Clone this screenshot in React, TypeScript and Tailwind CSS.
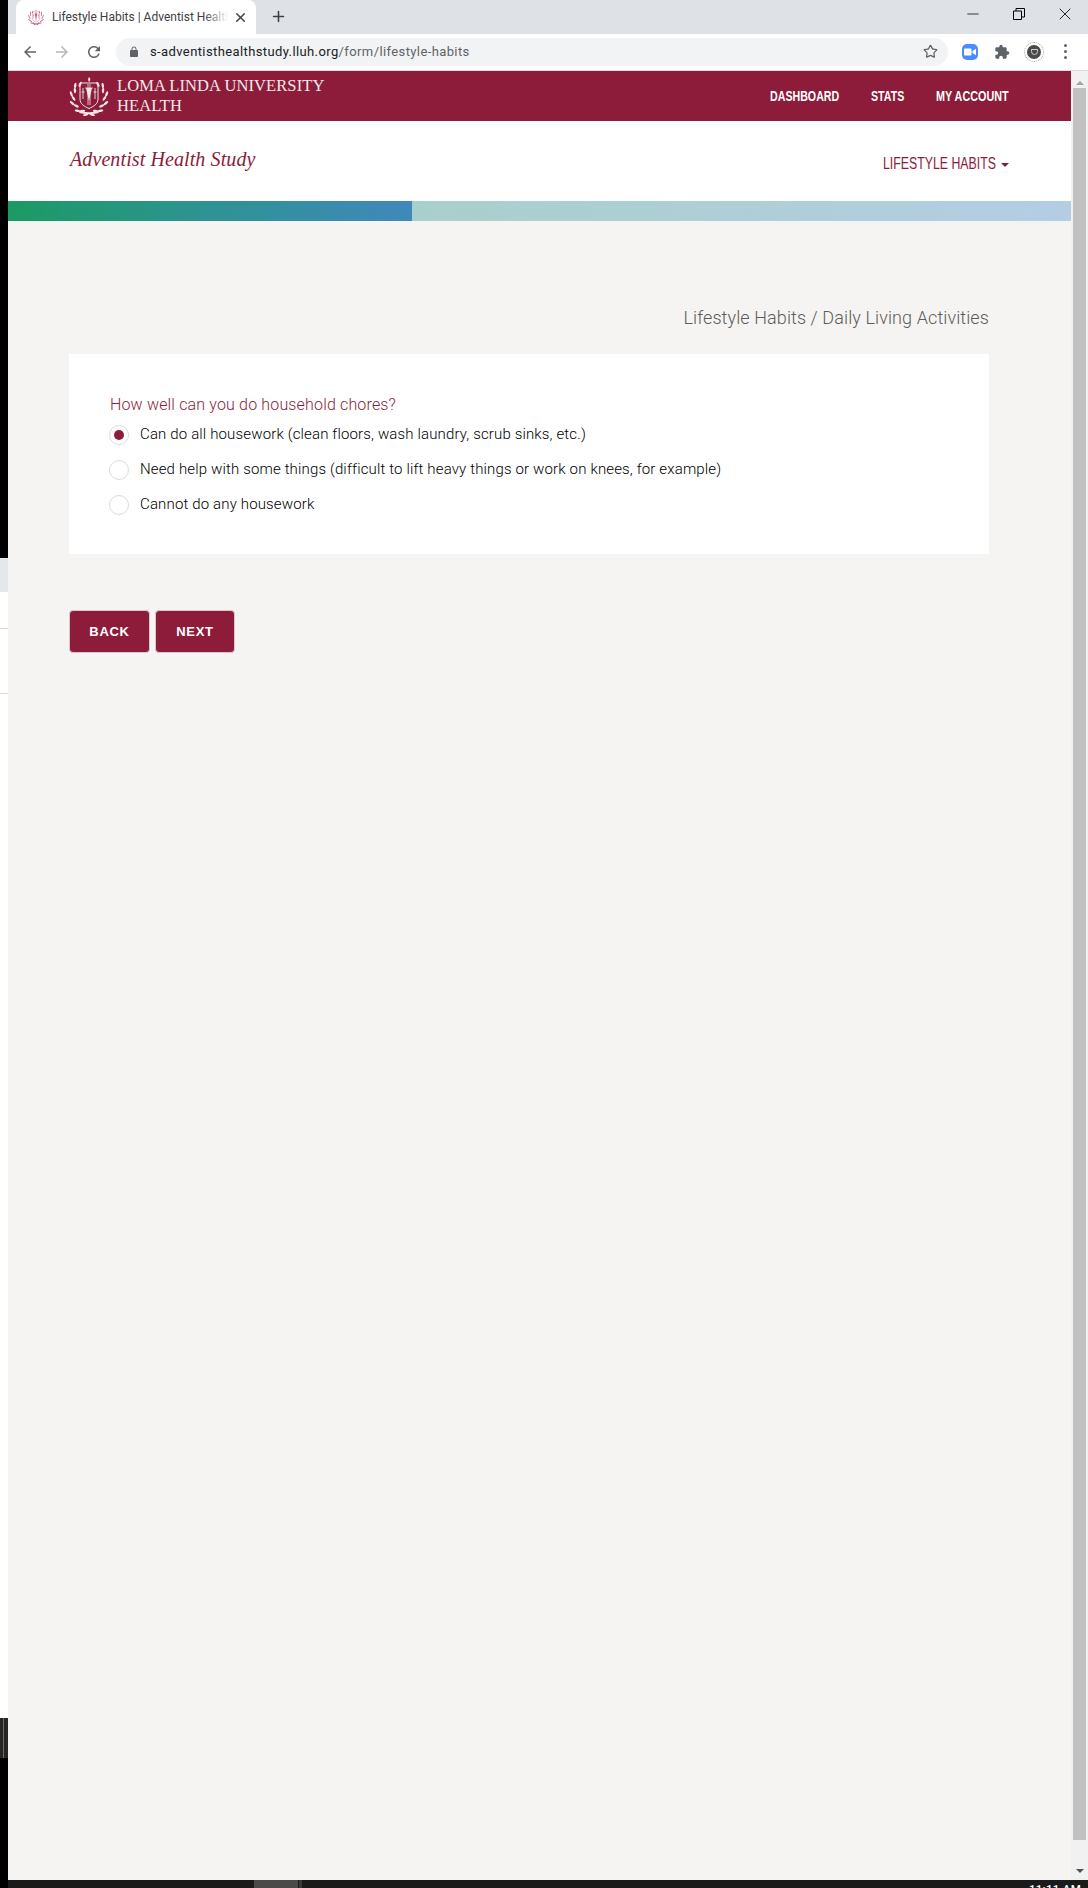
import { Minus, Plus, Star, X } from "lucide-react";

const crimson = "bg-[#8c1c3a]";

function Crest({ className, color }: { className: string; color: string }) {
  const leaves = [0, 1, 2, 3, 4, 5, 6, 7, 8, 9];
  return (
    <svg viewBox="0 0 40 40" className={className} fill="none" stroke={color}>
      {leaves.map((i) => {
        const deg = 100 + i * 15;
        const rad = (deg * Math.PI) / 180;
        const outer = i % 2 === 0 ? 18 : 15.5;
        const x = outer * Math.cos(rad);
        const y = outer * Math.sin(rad);
        return (
          <g key={i}>
            <ellipse cx={20 + x} cy={21 + y} rx="2.8" ry="1.2" fill={color} stroke="none" transform={`rotate(${deg + 60} ${20 + x} ${21 + y})`} />
            <ellipse cx={20 - x} cy={21 + y} rx="2.8" ry="1.2" fill={color} stroke="none" transform={`rotate(${-deg - 60} ${20 - x} ${21 + y})`} />
          </g>
        );
      })}
      <path d="M11 7h18v16c0 5-4.500 7.500-9 9.500-4.500-2-9-4.500-9-9.500z" strokeWidth="1" />
      <path d="M19 8v21M21 8v21M16 12h8" strokeWidth=".8" />
      <path d="M17 12l3 13 3-13z" fill={color} stroke="none" />
      <path d="M14 12v11M12.500 16h3M26 12v11M24.500 16h3" strokeWidth=".9" />
      <path d="M20 1c2 1.500 1.500 3.500 0 5-1-1.500-1.500-3 0-5z" fill={color} stroke="none" />
      <path d="M9 34c4 3 18 3 22 0l-1.500 3c-5 1.500-14 1.500-19 0z" fill={color} stroke="none" />
    </svg>
  );
}

function ChromeBar() {
  return (
    <>
      <div className="flex h-[34px] items-end bg-[#dee1e6]">
        <div className="ml-2 flex h-[34px] w-[240px] items-center rounded-t-lg bg-white pl-3 pr-2">
          <Crest className="h-4 w-4 shrink-0" color="#c4557a" />
          <div className="relative ml-2 w-[176px] overflow-hidden whitespace-nowrap text-xs text-[#3c4043]">
            Lifestyle Habits | Adventist Health Study
            <div className="absolute inset-y-0 right-0 w-6 bg-gradient-to-r from-transparent to-white" />
          </div>
          <X className="ml-[5px] h-[15px] w-[15px] text-[#45484c]" strokeWidth={2.5} />
        </div>
        <Plus className="mb-[9px] ml-[14px] h-[17px] w-[17px] text-[#3c4043]" strokeWidth={2.2} />
        <div className="mb-[6px] ml-auto flex h-7 text-black">
          <div className="flex w-[46px] items-center justify-center"><Minus className="h-[18px] w-[18px]" strokeWidth={1} /></div>
          <div className="flex w-[46px] items-center justify-center">
            <svg viewBox="0 0 12 12" className="h-3 w-3" fill="none" stroke="currentColor">
              <path d="M.5 3h8v8.500h-8zM3 3V.500h8.500V9H8.500" />
            </svg>
          </div>
          <div className="flex w-[46px] items-center justify-center"><X className="h-5 w-5" strokeWidth={1} /></div>
        </div>
      </div>
      <div className="flex h-[37px] items-center border-b border-[#dadce0] bg-white pb-px">
        <svg viewBox="0 0 24 24" className="ml-[13px] h-[18px] w-[18px]" fill="#5f6368"><path d="M20 11H7.830l5.590-5.590L12 4l-8 8 8 8 1.410-1.410L7.830 13H20v-2z" /></svg>
        <svg viewBox="0 0 24 24" className="ml-[14px] h-[18px] w-[18px] rotate-180" fill="#b5b7ba"><path d="M20 11H7.830l5.590-5.590L12 4l-8 8 8 8 1.410-1.410L7.830 13H20v-2z" /></svg>
        <svg viewBox="0 0 24 24" className="ml-[14px] h-[18px] w-[18px]" fill="#5f6368"><path d="M17.650 6.350C16.200 4.900 14.210 4 12 4c-4.420 0-7.990 3.580-7.990 8s3.570 8 7.990 8c3.730 0 6.840-2.550 7.730-6h-2.080c-.82 2.330-3.040 4-5.650 4-3.310 0-6-2.690-6-6s2.690-6 6-6c1.660 0 3.140.69 4.220 1.780L13 11h7V4l-2.350 2.350z" /></svg>
        <div className="ml-[13px] flex h-7 w-[832px] items-center rounded-full bg-[#f1f3f4] pl-[12px] pr-[10px]">
          <svg viewBox="0 0 24 24" className="h-3 w-3" fill="#5f6368"><path d="M18 8h-1V6c0-2.760-2.240-5-5-5S7 3.240 7 6v2H6c-1.100 0-2 .9-2 2v10c0 1.100.9 2 2 2h12c1.100 0 2-.9 2-2V10c0-1.100-.9-2-2-2zm-2.900 0H8.900V6c0-1.710 1.390-3.100 3.100-3.100 1.710 0 3.100 1.390 3.100 3.100v2z" /></svg>
          <span className="ml-[10px] whitespace-nowrap text-[13px] tracking-[0.39px] text-[#202124]">
            s-adventisthealthstudy.lluh.org<span className="text-[#5f6368]">/form/lifestyle-habits</span>
          </span>
          <Star className="ml-auto h-[15px] w-[15px] text-[#5f6368]" strokeWidth={2} />
        </div>
        <div className="ml-[14px] flex h-4 w-4 items-center justify-center rounded-[5px] bg-[#4a8cff]">
          <svg viewBox="0 0 12 8" className="h-[8px] w-[12px]" fill="white"><path d="M0 1.500A1 1 0 0 1 1 .5h5.500a1 1 0 0 1 1 1v5a1 1 0 0 1-1 1H1a1 1 0 0 1-1-1zM8.500 3L12 .8v6.400L8.500 5z" /></svg>
        </div>
        <svg viewBox="0 0 24 24" className="ml-4 h-4 w-4" fill="#5f6368"><path d="M20.500 11H19V7c0-1.100-.9-2-2-2h-4V3.500C13 2.120 11.880 1 10.500 1S8 2.120 8 3.500V5H4c-1.100 0-1.990.9-1.990 2v3.800H3.500c1.490 0 2.700 1.210 2.700 2.700s-1.210 2.700-2.700 2.700H2V20c0 1.100.9 2 2 2h3.800v-1.500c0-1.490 1.210-2.700 2.700-2.700 1.490 0 2.700 1.210 2.700 2.700V22H17c1.100 0 2-.9 2-2v-4h1.500c1.380 0 2.500-1.120 2.500-2.500S21.880 11 20.500 11z" /></svg>
        <div className="ml-[14px] flex h-5 w-5 items-center justify-center rounded-full border border-dotted border-[#9a9a9a] bg-white">
          <div className="flex h-[14px] w-[14px] items-center justify-center rounded-full bg-[#4a4a4a]">
            <div className="h-[6px] w-[7px] rounded-b-full border border-[#cfcfcf]" />
          </div>
        </div>
        <div className="ml-5 flex flex-col gap-[3px]">
          <div className="h-[3px] w-[3px] rounded-full bg-[#5f6368]" />
          <div className="h-[3px] w-[3px] rounded-full bg-[#5f6368]" />
          <div className="h-[3px] w-[3px] rounded-full bg-[#5f6368]" />
        </div>
      </div>
    </>
  );
}

function RadioRow({ label, checked }: { label: string; checked?: boolean }) {
  return (
    <label className="flex h-[35px] items-center gap-[11px] text-[15px] font-light tracking-[0.15px] text-black">
      <span className="flex h-5 w-5 items-center justify-center rounded-full border border-[#dcdcdc] bg-white">
        {checked && <span className="h-[10px] w-[10px] rounded-full bg-[#8c1c3a]" />}
      </span>
      {label}
    </label>
  );
}

function PageBody() {
  return (
    <div className="min-w-0 flex-1 bg-[#f5f4f2] font-['Roboto',sans-serif]">
      <div className={`flex h-[50px] items-center justify-between pl-[61px] pr-[61px] ${crimson}`}>
        <div className="flex items-center gap-[8px]">
          <Crest className="h-[40px] w-[40px]" color="#f3e6ea" />
          <div className="font-['Liberation_Serif',serif] text-[16.500px] leading-[20px] tracking-[0.1px] text-[#f5e9ec]">
            LOMA LINDA UNIVERSITY
            <br />
            HEALTH
          </div>
        </div>
        {/* no condensed face installed, so the nav text is squeezed */}
        <nav className="flex gap-[31px] font-['Liberation_Sans',sans-serif] text-[15px] font-bold text-white">
          <span className="w-[70px]"><span className="inline-block origin-left scale-x-[0.71] whitespace-nowrap">DASHBOARD</span></span>
          <span className="w-[34px]"><span className="inline-block origin-left scale-x-[0.71] whitespace-nowrap">STATS</span></span>
          <span className="w-[74px]"><span className="inline-block origin-left scale-x-[0.72] whitespace-nowrap">MY ACCOUNT</span></span>
        </nav>
      </div>
      <div className="flex h-[80px] items-center justify-between bg-white pl-[62px] pr-[62px]">
        <div className="mb-[4px] font-['Liberation_Serif',serif] text-[20px] italic tracking-[0.1px] text-[#8c1c3a]">Adventist Health Study</div>
        <div className="mt-[5px] flex items-center gap-[6px] font-['Liberation_Sans',sans-serif] text-[16px] text-[#8c1c3a]">
          <span className="w-[112px]"><span className="inline-block origin-left scale-x-[0.77] whitespace-nowrap">LIFESTYLE HABITS</span></span>
          <span className="mt-[2px] h-0 w-0 border-x-[4px] border-t-[4px] border-x-transparent border-t-[#8c1c3a]" />
        </div>
      </div>
      <div className="flex h-5">
        <div className="w-[404px] bg-gradient-to-r from-[#1b9a63] to-[#4088bc]" />
        <div className="flex-1 bg-gradient-to-r from-[#a8d0cb] to-[#b4cde3]" />
      </div>
      <div className="pl-[61px] pr-[82px] pt-[84px]">
        <h1 className="mb-[23px] text-right text-[18px] font-light leading-[26px] tracking-[0.1px] text-[#5c5c5c]">
          Lifestyle Habits / Daily Living Activities
        </h1>
        <div className="h-[200px] bg-white pl-[40px] pt-[39px]">
          <div className="pl-px text-[16px] font-light leading-[24px] tracking-[0.16px] text-[#8c1c3a]">How well can you do household chores?</div>
          <RadioRow label="Can do all housework (clean floors, wash laundry, scrub sinks, etc.)" checked />
          <RadioRow label="Need help with some things (difficult to lift heavy things or work on knees, for example)" />
          <RadioRow label="Cannot do any housework" />
        </div>
        <div className="mt-[56px] flex gap-[5px] font-['Liberation_Sans',sans-serif] text-[13px] font-bold tracking-[0.7px] text-white">
          <button className={`h-[43px] w-[81px] rounded-[4px] border border-[#d8c8cc] ${crimson}`}>BACK</button>
          <button className={`h-[43px] w-[80px] rounded-[4px] border border-[#d8c8cc] ${crimson}`}>NEXT</button>
        </div>
      </div>
    </div>
  );
}

function Scrollbar() {
  return (
    <div className="flex w-[17px] flex-col items-center bg-[#f1f1f1] pb-[7px] pt-[10px]">
      <span className="h-0 w-0 border-x-[4px] border-b-[4px] border-x-transparent border-b-[#a3a3a3]" />
      <div className="mt-[3px] w-[13px] flex-1 bg-[#c1c1c1]" />
      <span className="mt-[29px] h-0 w-0 border-x-[4px] border-t-[4px] border-x-transparent border-t-[#505050]" />
    </div>
  );
}

export default function App() {
  return (
    <div className="flex h-[1888px] w-[1088px] overflow-hidden bg-black font-['Roboto',sans-serif]">
      <div className="flex w-2 shrink-0 flex-col">
        <div className="h-[558px] bg-black" />
        <div className="h-[34px] bg-[#e5e8eb]" />
        <div className="h-[37px] border-b border-[#d8d8d8] bg-white" />
        <div className="h-[65px] border-b border-[#d8d8d8] bg-white" />
        <div className="flex-1 bg-white" />
        <div className="flex h-10 bg-[#252525]">
          <div className="ml-[3px] w-px bg-[#6a6a6a]" />
        </div>
        <div className="h-[130px] bg-black" />
      </div>
      <div className="flex min-w-0 flex-1 flex-col">
        <ChromeBar />
        <div className="flex min-h-0 flex-1">
          <PageBody />
          <Scrollbar />
        </div>
        <div className="flex h-2 shrink-0 overflow-hidden bg-[#1a1a1a]">
          <div className="ml-[246px] h-2 w-11 bg-[#4a4a4a]" />
          <div className="ml-px h-2 w-[3px] bg-[#3a3a3a]" />
          <div className="ml-auto mr-[7px] whitespace-nowrap text-[11.500px] font-medium leading-[18px] tracking-[0.3px] text-white">11:11 AM</div>
        </div>
      </div>
    </div>
  );
}
